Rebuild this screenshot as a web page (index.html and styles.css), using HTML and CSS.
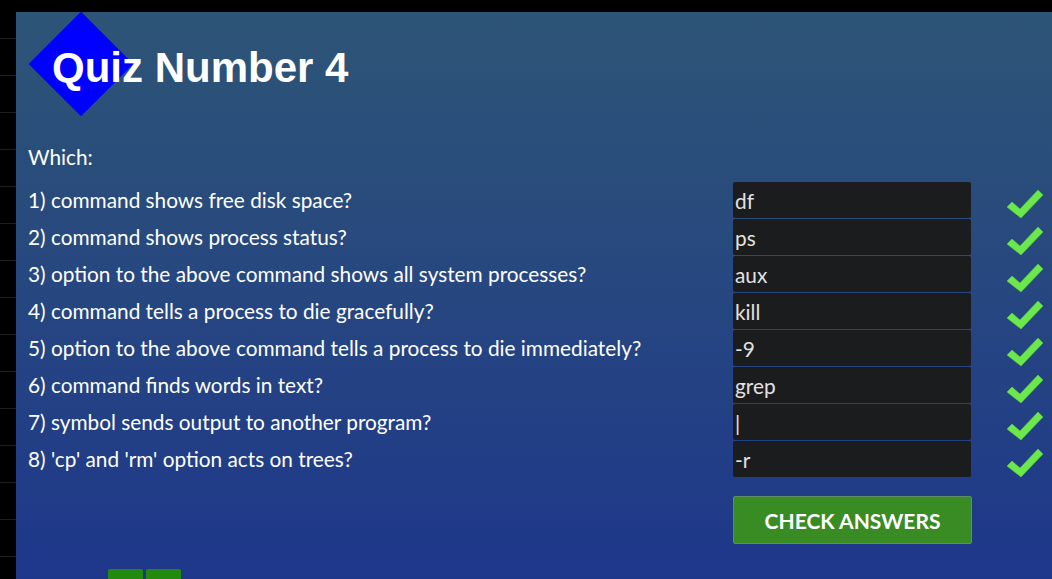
FILE: index.html
```html
<!DOCTYPE html>
<html>
<head>
<meta charset="utf-8">
<title>Quiz Number 4</title>
<link rel="stylesheet" href="styles.css">
</head>
<body>
<div class="page">
  <main class="panel">
    <header class="header">
      <div class="diamond"></div>
      <h1 class="title">Quiz Number 4</h1>
    </header>
    <p class="intro">Which:</p>
    <div class="quiz">
      <label class="q">1) command shows free disk space?</label>
      <input class="answer" type="text" value="df">
      <span class="check"><svg viewBox="0 0 38 30" width="38" height="30"><polygon points="1,18 6,13 14,20 32,1 37,6 15,29"/></svg></span>

      <label class="q">2) command shows process status?</label>
      <input class="answer" type="text" value="ps">
      <span class="check"><svg viewBox="0 0 38 30" width="38" height="30"><polygon points="1,18 6,13 14,20 32,1 37,6 15,29"/></svg></span>

      <label class="q">3) option to the above command shows all system processes?</label>
      <input class="answer" type="text" value="aux">
      <span class="check"><svg viewBox="0 0 38 30" width="38" height="30"><polygon points="1,18 6,13 14,20 32,1 37,6 15,29"/></svg></span>

      <label class="q">4) command tells a process to die gracefully?</label>
      <input class="answer" type="text" value="kill">
      <span class="check"><svg viewBox="0 0 38 30" width="38" height="30"><polygon points="1,18 6,13 14,20 32,1 37,6 15,29"/></svg></span>

      <label class="q">5) option to the above command tells a process to die immediately?</label>
      <input class="answer" type="text" value="-9">
      <span class="check"><svg viewBox="0 0 38 30" width="38" height="30"><polygon points="1,18 6,13 14,20 32,1 37,6 15,29"/></svg></span>

      <label class="q">6) command finds words in text?</label>
      <input class="answer" type="text" value="grep">
      <span class="check"><svg viewBox="0 0 38 30" width="38" height="30"><polygon points="1,18 6,13 14,20 32,1 37,6 15,29"/></svg></span>

      <label class="q">7) symbol sends output to another program?</label>
      <input class="answer" type="text" value="|">
      <span class="check"><svg viewBox="0 0 38 30" width="38" height="30"><polygon points="1,18 6,13 14,20 32,1 37,6 15,29"/></svg></span>

      <label class="q">8) 'cp' and 'rm' option acts on trees?</label>
      <input class="answer" type="text" value="-r">
      <span class="check"><svg viewBox="0 0 38 30" width="38" height="30"><polygon points="1,18 6,13 14,20 32,1 37,6 15,29"/></svg></span>
    </div>
    <div class="actions">
      <button class="btn-check" type="button">Check Answers</button>
    </div>
    <nav class="pager">
      <span class="pager-btn"></span>
      <span class="pager-btn"></span>
    </nav>
  </main>
</div>
</body>
</html>
```

FILE: styles.css
```css
html, body {
  margin: 0;
  padding: 0;
  height: 100%;
  overflow: hidden;
}

body {
  background-color: #000;
  background-image: repeating-linear-gradient(to bottom, #000 0, #000 36px, #1f1f1f 36px, #1f1f1f 37px);
  background-position: 0 2px;
  font-family: Lato, "Noto Sans", sans-serif;
}

.page {
  padding: 12px 0 0 16px;
  height: 100%;
  box-sizing: border-box;
}

.panel {
  position: relative;
  height: 100%;
  overflow: hidden;
  box-sizing: border-box;
  padding: 0 0 0 12px;
  background: linear-gradient(to bottom, #2d5576 0%, #27487f 45%, #1e378b 100%);
  color: #fff;
}

.header {
  position: relative;
  padding-top: 32px;
}

.diamond {
  position: absolute;
  left: 16px;
  top: 15px;
  width: 74px;
  height: 74px;
  background: #0000ff;
  transform: rotate(45deg);
  transform-origin: 50% 50%;
}

.title {
  position: relative;
  margin: 0 0 0 24px;
  font-family: "Liberation Sans", Arial, sans-serif;
  font-weight: bold;
  font-size: 42px;
  line-height: 48px;
  color: #fff;
}

.intro {
  margin: 53px 0 0 0;
  font-size: 20.8px;
  line-height: 24px;
  color: #fff;
}

.quiz {
  margin-top: 13px;
  display: grid;
  grid-template-columns: 705px 238px auto;
  grid-auto-rows: 36px;
  row-gap: 1px;
}

.q {
  font-size: 20.8px;
  line-height: 35px;
  height: 36px;
  color: #fff;
  white-space: nowrap;
}

.answer {
  height: 36px;
  width: 238px;
  box-sizing: border-box;
  margin: 0;
  border: none;
  border-radius: 2px;
  background: #1b1c1e;
  color: #e2e2e2;
  font-family: Lato, "Noto Sans", sans-serif;
  font-size: 20.8px;
  padding: 0 2px;
  outline: none;
}

.check {
  padding-left: 35px;
  padding-top: 7px;
  display: block;
  line-height: 0;
  height: 36px;
  box-sizing: border-box;
  overflow: visible;
}

.check svg {
  display: block;
  overflow: visible;
}

.check polygon {
  fill: #6be84b;
  stroke: #5ccc40;
  stroke-width: 0.6;
}

.actions {
  margin-top: 19px;
  padding-left: 705px;
}

.btn-check {
  width: 239px;
  height: 48px;
  box-sizing: border-box;
  background: #388c23;
  border: 1px solid #5f8f61;
  border-radius: 2px;
  color: #fff;
  font-family: Lato, "Noto Sans", sans-serif;
  font-weight: bold;
  font-size: 21px;
  text-transform: uppercase;
  cursor: pointer;
  padding: 0;
}

.pager {
  display: flex;
  gap: 3px;
  margin-top: 25px;
  padding-left: 80px;
}

.pager-btn {
  display: block;
  width: 35px;
  height: 36px;
  background: #238a10;
  border-radius: 2px 2px 0 0;
}
```
